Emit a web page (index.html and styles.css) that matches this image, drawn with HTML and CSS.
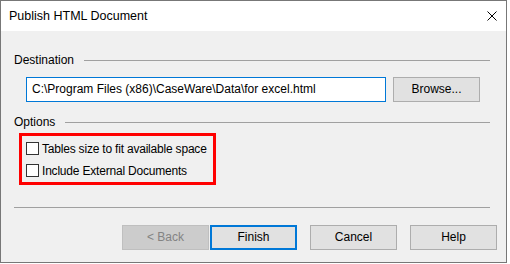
FILE: index.html
```html
<!DOCTYPE html>
<html>

<head>
    <link rel="stylesheet" href="styles.css">
</head>

<body>
    <div class="window">
        <div class="titlebar">
            <span class="title">Publish HTML Document</span>
            <svg class="close" width="10" height="10" viewBox="0 0 10 10">
                <path d="M0.5 0.5 L9.5 9.5 M9.5 0.5 L0.5 9.5" stroke="#000" stroke-width="1" fill="none" />
            </svg>
        </div>

        <div class="content">
            <div class="group-head first">
                <span>Destination</span>
                <div class="line"></div>
            </div>
            <div class="path-row">
                <div class="textbox">C:\Program Files (x86)\CaseWare\Data\for excel.html</div>
                <div class="button">Browse...</div>
            </div>

            <div class="group-head options">
                <span>Options</span>
                <div class="line"></div>
            </div>
            <div class="highlight">
                <div class="check-row">
                    <div class="checkbox"></div>
                    <span>Tables size to fit available space</span>
                </div>
                <div class="check-row">
                    <div class="checkbox"></div>
                    <span>Include External Documents</span>
                </div>
            </div>

            <div class="separator"></div>
        </div>

        <div class="buttons">
            <div class="button disabled">&lt; Back</div>
            <div class="button default">Finish</div>
            <div class="button spaced">Cancel</div>
            <div class="button spaced">Help</div>
        </div>
    </div>
</body>

</html>
```

FILE: styles.css
```css
body {
    margin: 0;
    background-color: #ffffff;
    font-family: "Liberation Sans", Arial, sans-serif;
    font-size: 12px;
    color: #000000;
    white-space: nowrap;
}

.window {
    width: 505px;
    height: 261px;
    border: 1px solid #777777;
    background-color: #f0f0f0;
    display: flex;
    flex-direction: column;
}

.titlebar {
    height: 30px;
    background-color: #ffffff;
    display: flex;
    align-items: center;
    padding: 0 9px 0 8px;
}

.title {
    flex: 1;
    font-size: 12.5px;
}

.close {
    margin-bottom: 1px;
}

.content {
    padding: 0 16px 0 13px;
}

.group-head {
    height: 18px;
    display: flex;
    align-items: center;
}

.group-head.first {
    margin-top: 20px;
}

.group-head.options {
    margin-top: 11px;
}

.group-head>.line {
    flex: 1;
    height: 1px;
    margin-left: 10px;
    background-color: #a0a0a0;
}

.path-row {
    display: flex;
    margin-top: 8px;
    padding-left: 12px;
}

.textbox {
    width: 353px;
    height: 23px;
    line-height: 23px;
    border: 1px solid #0078d7;
    background-color: #ffffff;
    padding-left: 5px;
}

.button {
    width: 85px;
    height: 23px;
    line-height: 23px;
    border: 1px solid #adadad;
    background-color: #e1e1e1;
    text-align: center;
}

.path-row>.button {
    margin-left: 7px;
}

.highlight {
    width: 187px;
    height: 40px;
    margin: 2px 0 0 5px;
    border: 3px solid #ff0000;
    padding: 6px 0 0 4px;
}

.check-row {
    height: 13px;
    display: flex;
    align-items: center;
    margin-bottom: 9px;
    letter-spacing: -0.2px;
}

.checkbox {
    width: 11px;
    height: 11px;
    border: 1px solid #333333;
    background-color: #ffffff;
    margin-right: 3px;
}

.separator {
    height: 1px;
    margin-top: 22px;
    background-color: #a0a0a0;
}

.buttons {
    display: flex;
    padding-left: 121px;
    margin-top: 17px;
}

.button.disabled {
    background-color: #cccccc;
    border-color: #bfbfbf;
    color: #838383;
}

.button.default {
    margin-left: 1px;
    width: 83px;
    height: 21px;
    line-height: 21px;
    border: 2px solid #0078d7;
}

.button.spaced {
    margin-left: 13px;
}
```
